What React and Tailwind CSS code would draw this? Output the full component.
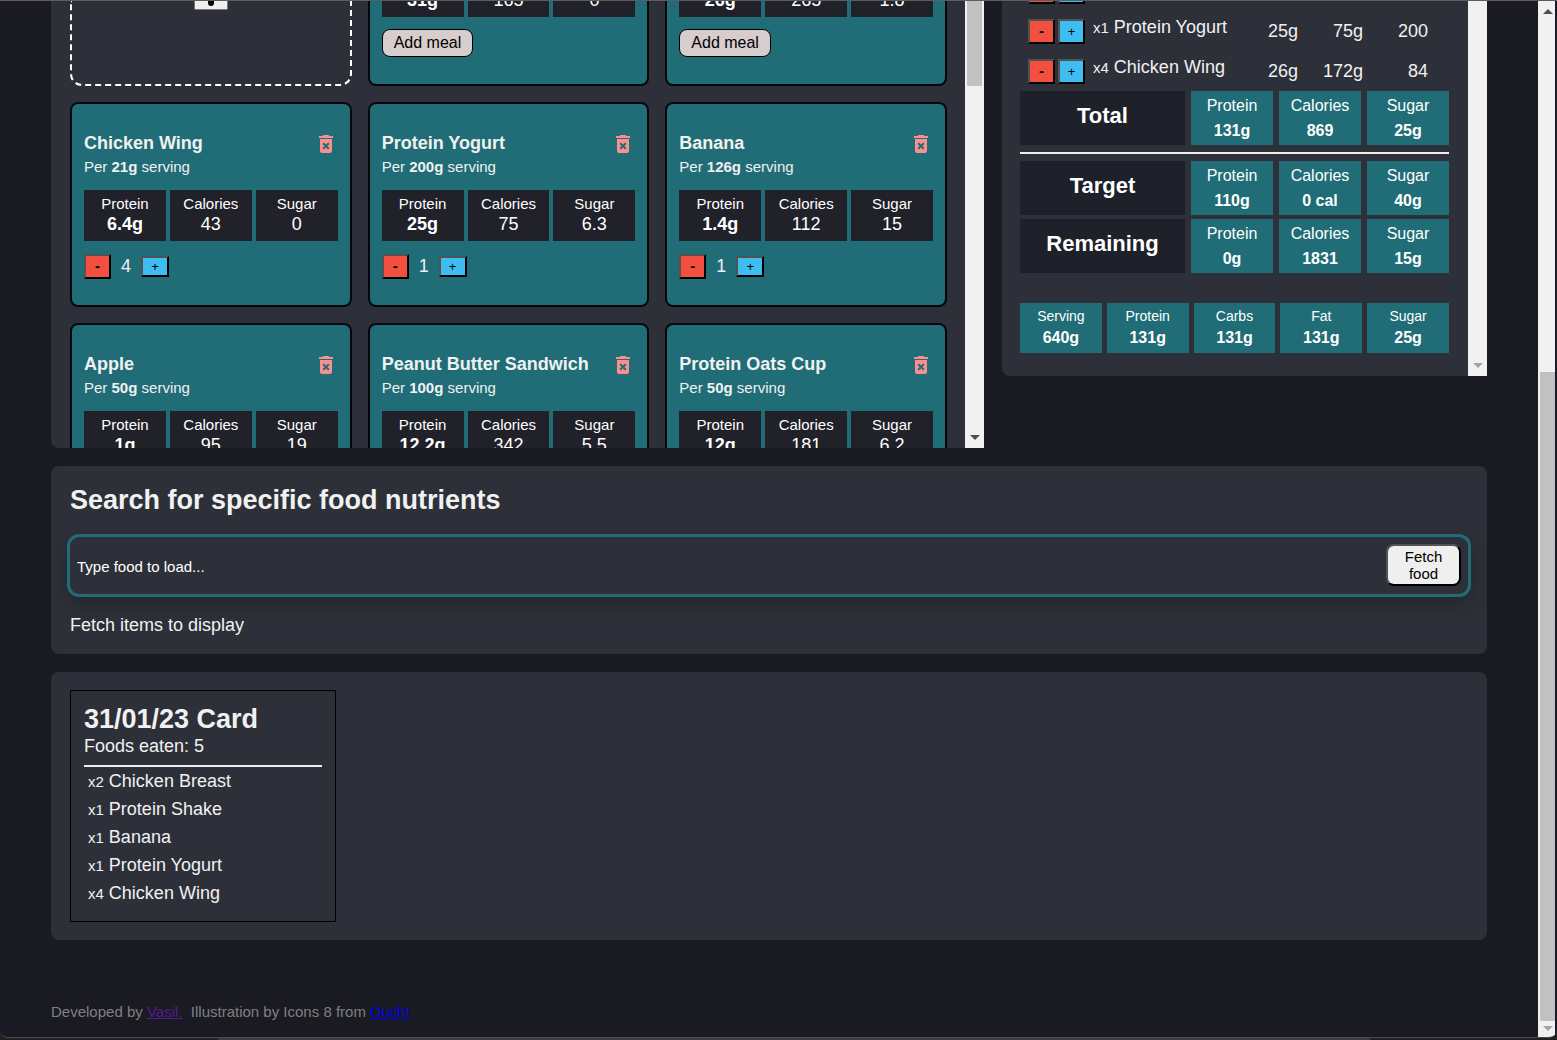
import React from "react";

const meals = [
  { name: "Chicken Wing", serving: "21g", protein: "6.4g", calories: "43", sugar: "0", count: 4 },
  { name: "Protein Yogurt", serving: "200g", protein: "25g", calories: "75", sugar: "6.3", count: 1 },
  { name: "Banana", serving: "126g", protein: "1.4g", calories: "112", sugar: "15", count: 1 },
  { name: "Apple", serving: "50g", protein: "1g", calories: "95", sugar: "19", count: 1 },
  { name: "Peanut Butter Sandwich", serving: "100g", protein: "12.2g", calories: "342", sugar: "5.5", count: 1 },
  { name: "Protein Oats Cup", serving: "50g", protein: "12g", calories: "181", sugar: "6.2", count: 1 },
];

const scrolledMeals = [
  { protein: "31g", calories: "165", sugar: "0" },
  { protein: "26g", calories: "265", sugar: "1.8" },
];

const eaten = [
  { count: "x1", name: "Banana", values: ["1g", "112g", "126"] },
  { count: "x1", name: "Protein Yogurt", values: ["25g", "75g", "200"] },
  { count: "x4", name: "Chicken Wing", values: ["26g", "172g", "84"] },
];

const cardFoods = [
  ["x2", "Chicken Breast"],
  ["x1", "Protein Shake"],
  ["x1", "Banana"],
  ["x1", "Protein Yogurt"],
  ["x4", "Chicken Wing"],
];

const dailyStats = [
  ["Serving", "640g"],
  ["Protein", "131g"],
  ["Carbs", "131g"],
  ["Fat", "131g"],
  ["Sugar", "25g"],
];

function TrashIcon() {
  return (
    <svg viewBox="0 0 24 24" className="size-6 fill-[#fb8f8f]" aria-hidden="true">
      <path d="M6 19c0 1.1.9 2 2 2h8c1.1 0 2-.9 2-2V7H6v12zm2.46-7.12l1.41-1.41L12 12.59l2.12-2.12 1.41 1.41L13.41 14l2.12 2.12-1.41 1.41L12 15.41l-2.12 2.12-1.41-1.41L10.59 14l-2.13-2.12zM15.5 4l-1-1h-5l-1 1H5v2h14V4z" />
    </svg>
  );
}

function Arrow({ up, className }) {
  return (
    <svg viewBox="0 0 10 5" className={`h-[5px] w-[10px] ${className}`} aria-hidden="true">
      <path d={up ? "M5 0L10 5H0z" : "M0 0H10L5 5z"} />
    </svg>
  );
}

function StepButton({ sign, className }) {
  const minus = sign === "-";
  return (
    <button
      type="button"
      aria-label={minus ? "Remove one" : "Add one"}
      className={`flex items-center justify-center border-2 border-t-[#525252] border-l-[#525252] border-r-black border-b-black text-black ${
        minus ? "bg-[#f24f40] text-[15px] font-bold" : "bg-[#3dbdf2] text-[13px]"
      } ${className}`}
    >
      {sign}
    </button>
  );
}

function MealStats({ meal }) {
  const cells = [
    ["Protein", meal.protein],
    ["Calories", meal.calories],
    ["Sugar", meal.sugar],
  ];
  return (
    <dl className="grid grid-cols-3 gap-1">
      {cells.map(([label, value], i) => (
        <div key={label} className="flex h-[51px] flex-col bg-[#202129] pt-1 text-center text-white">
          <dt className="text-[15px] leading-5">{label}</dt>
          <dd className={`text-[18px] leading-5 ${i === 0 ? "font-bold" : ""}`}>{value}</dd>
        </div>
      ))}
    </dl>
  );
}

function MealCard({ meal }) {
  return (
    <article className="h-[205px] rounded-lg border-2 border-[#05070a] bg-[#206d77] px-3 pt-7">
      <div className="flex h-6 justify-between">
        <h3 className="text-[18px] leading-[22px] font-bold">{meal.name}</h3>
        <button type="button" aria-label={`Delete ${meal.name}`}>
          <TrashIcon />
        </button>
      </div>
      <p className="mb-3 text-[15px] leading-[22px]">
        Per <b>{meal.serving}</b> serving
      </p>
      <MealStats meal={meal} />
      <div className="mt-3 flex h-[27px] items-center">
        <StepButton sign="-" className="h-[25px] w-[27px]" />
        <span className="w-[30px] text-center text-[18px] leading-[27px]">{meal.count}</span>
        <StepButton sign="+" className="h-[21px] w-7" />
      </div>
    </article>
  );
}

function SummaryRow({ title, values }) {
  return (
    <div className="grid grid-cols-[165px_1fr_1fr_1fr] gap-1.5 text-center text-white">
      <h3 className="bg-[#1e2129] pt-3 text-[22px] leading-[26px] font-bold">{title}</h3>
      {["Protein", "Calories", "Sugar"].map((label, i) => (
        <p key={label} className="flex h-[54px] flex-col bg-[#206d77] pt-0.5 text-[16px] leading-[25px]">
          <span>{label}</span>
          <b>{values[i]}</b>
        </p>
      ))}
    </div>
  );
}

function MealsPanel() {
  return (
    <section className="flex h-[448px] min-w-0 flex-1 overflow-hidden rounded-bl-lg bg-[#2e3039]">
      <div className="grid min-w-0 flex-1 grid-cols-3 content-start gap-4 pr-[18px] pl-[19px]">
        <div className="flex h-[86px] justify-center rounded-b-xl border-2 border-t-0 border-dashed border-white">
          <button
            type="button"
            aria-label="Add new meal"
            className="flex h-[10px] w-[34px] justify-center rounded-b-xs border border-t-0 border-[#767676] bg-[#efefef]"
          >
            <span className="h-[6px] w-[6px] rounded-b-full bg-black" />
          </button>
        </div>
        {scrolledMeals.map((meal) => (
          <article
            key={meal.protein}
            className="flex h-[86px] flex-col justify-end overflow-hidden rounded-b-lg border-2 border-t-0 border-[#05070a] bg-[#206d77] px-3 pb-[27px]"
          >
            <MealStats meal={meal} />
            <button
              type="button"
              className="mt-3 h-7 shrink-0 self-start rounded-lg border border-black bg-[#d8cdcd] px-[11px] text-[16px] leading-[26px] text-black"
            >
              Add meal
            </button>
          </article>
        ))}
        {meals.map((meal) => (
          <MealCard key={meal.name} meal={meal} />
        ))}
      </div>
      <div className="flex w-[19px] flex-col items-center justify-between bg-[#f1f1f1]">
        <div className="h-[86px] w-[15px] bg-[#c1c1c1]" />
        <Arrow className="mb-2 fill-[#505050]" />
      </div>
    </section>
  );
}

function TrackerPanel() {
  return (
    <section className="flex h-[376px] w-[485px] shrink-0 overflow-hidden rounded-bl-lg bg-[#2e3039]">
      <div className="flex min-w-0 flex-1 flex-col pr-[19px] pl-[18px]">
        <ul className="flex h-[91px] flex-col justify-end overflow-hidden px-2">
          {eaten.map((food) => (
            <li key={food.name} className="flex h-10 shrink-0 pr-[13px]">
              <div className="flex items-start gap-[3px] pt-2">
                <StepButton sign="-" className="h-[25px] w-[27px]" />
                <StepButton sign="+" className="h-[25px] w-[27px]" />
              </div>
              <p className="min-w-0 flex-1 pl-2 text-[18px] leading-8">
                <span className="text-[15px]">{food.count}</span> {food.name}
              </p>
              {food.values.map((value) => (
                <span key={value} className="w-[65px] text-right text-[18px] leading-10">
                  {value}
                </span>
              ))}
            </li>
          ))}
        </ul>
        <SummaryRow title="Total" values={["131g", "869", "25g"]} />
        <hr className="my-[7px] border-t-2 border-[#eeeeee]" />
        <SummaryRow title="Target" values={["110g", "0 cal", "40g"]} />
        <div className="mt-1">
          <SummaryRow title="Remaining" values={["0g", "1831", "15g"]} />
        </div>
        <dl className="mt-[30px] grid grid-cols-5 gap-[5px] text-center text-white">
          {dailyStats.map(([label, value]) => (
            <div key={label} className="h-[50px] bg-[#206d77] pt-0.5">
              <dt className="text-[14px] leading-[22px]">{label}</dt>
              <dd className="text-[16px] leading-[22px] font-bold">{value}</dd>
            </div>
          ))}
        </dl>
      </div>
      <div className="flex w-[19px] flex-col items-center justify-end bg-[#f1f1f1]">
        <Arrow className="mb-2 fill-[#a3a3a3]" />
      </div>
    </section>
  );
}

function SearchPanel() {
  return (
    <section className="rounded-lg bg-[#2e3039] px-4 pt-[18px] pb-4">
      <h2 className="pl-[3px] text-[27px] leading-8 font-bold">Search for specific food nutrients</h2>
      <form
        className="mt-[18px] flex h-[63px] items-start rounded-xl border-[3px] border-[#206d77] px-[7px] pt-[7px] shadow-[0_8px_20px_rgba(0,0,0,0.22)]"
        onSubmit={(e) => e.preventDefault()}
      >
        <input
          type="text"
          aria-label="Food to load"
          placeholder="Type food to load..."
          className="h-11 min-w-0 flex-1 bg-transparent text-[15px] text-white outline-none placeholder:text-white"
        />
        <button
          type="submit"
          className="h-[42px] w-[75px] rounded-lg border-2 border-t-[#525252] border-l-[#525252] border-r-black border-b-black bg-[#efefef] px-3 text-[15px] leading-[17px] text-black"
        >
          Fetch food
        </button>
      </form>
      <p className="mt-4 pl-[3px] text-[18px] leading-[25px]">Fetch items to display</p>
    </section>
  );
}

function HistoryPanel() {
  return (
    <section className="rounded-lg bg-[#2e3039] px-[19px] py-[18px]">
      <article className="h-[232px] w-[266px] border border-black px-[13px] pt-3">
        <h2 className="text-[27px] leading-8 font-bold">31/01/23 Card</h2>
        <p className="text-[18px] leading-[22px]">Foods eaten: 5</p>
        <hr className="mt-2 border-t-2 border-[#eeeeee]" />
        <ul>
          {cardFoods.map(([count, name]) => (
            <li key={name} className="h-7 pl-1 text-[18px] leading-7">
              <span className="text-[15px]">{count}</span> {name}
            </li>
          ))}
        </ul>
      </article>
    </section>
  );
}

export default function App() {
  return (
    <div className="flex h-screen flex-col overflow-hidden border-t border-[#5d5d61] bg-[#202020] font-['Liberation_Sans',Arial,sans-serif] text-[#f1f1f1]">
      <div className="flex min-h-0 flex-1 overflow-hidden rounded-b-lg border-b border-[#4a4a4a] bg-[#1a1a22] pr-0.5">
        <main className="-mt-px flex min-w-0 flex-1 flex-col gap-[18px] px-[51px]">
          <div className="flex items-start gap-[18px]">
            <MealsPanel />
            <TrackerPanel />
          </div>
          <SearchPanel />
          <HistoryPanel />
          <footer className="mt-auto pb-[15px] text-[15px] leading-5 text-[#808080]">
            Developed by{" "}
            <a href="#vasil" className="text-[#551a8b] underline">
              Vasil.
            </a>
            &nbsp; Illustration by Icons 8 from{" "}
            <a href="#ouch" className="text-[#0000ee] underline">
              Ouch!
            </a>
          </footer>
        </main>
        <div className="flex w-[17px] flex-col items-center bg-[#f1f1f1] pl-0.5">
          <Arrow up className="mt-2 fill-[#505050]" />
          <div className="mt-[358px] mb-[5px] w-full flex-1 bg-[#c1c1c1]" />
          <Arrow className="mb-1.5 fill-[#a3a3a3]" />
        </div>
      </div>
      <div className="flex h-0.5 shrink-0 bg-[#202020]">
        <div className="ml-[14%] h-full w-[74%] bg-[#3c3c3c]" />
      </div>
    </div>
  );
}
